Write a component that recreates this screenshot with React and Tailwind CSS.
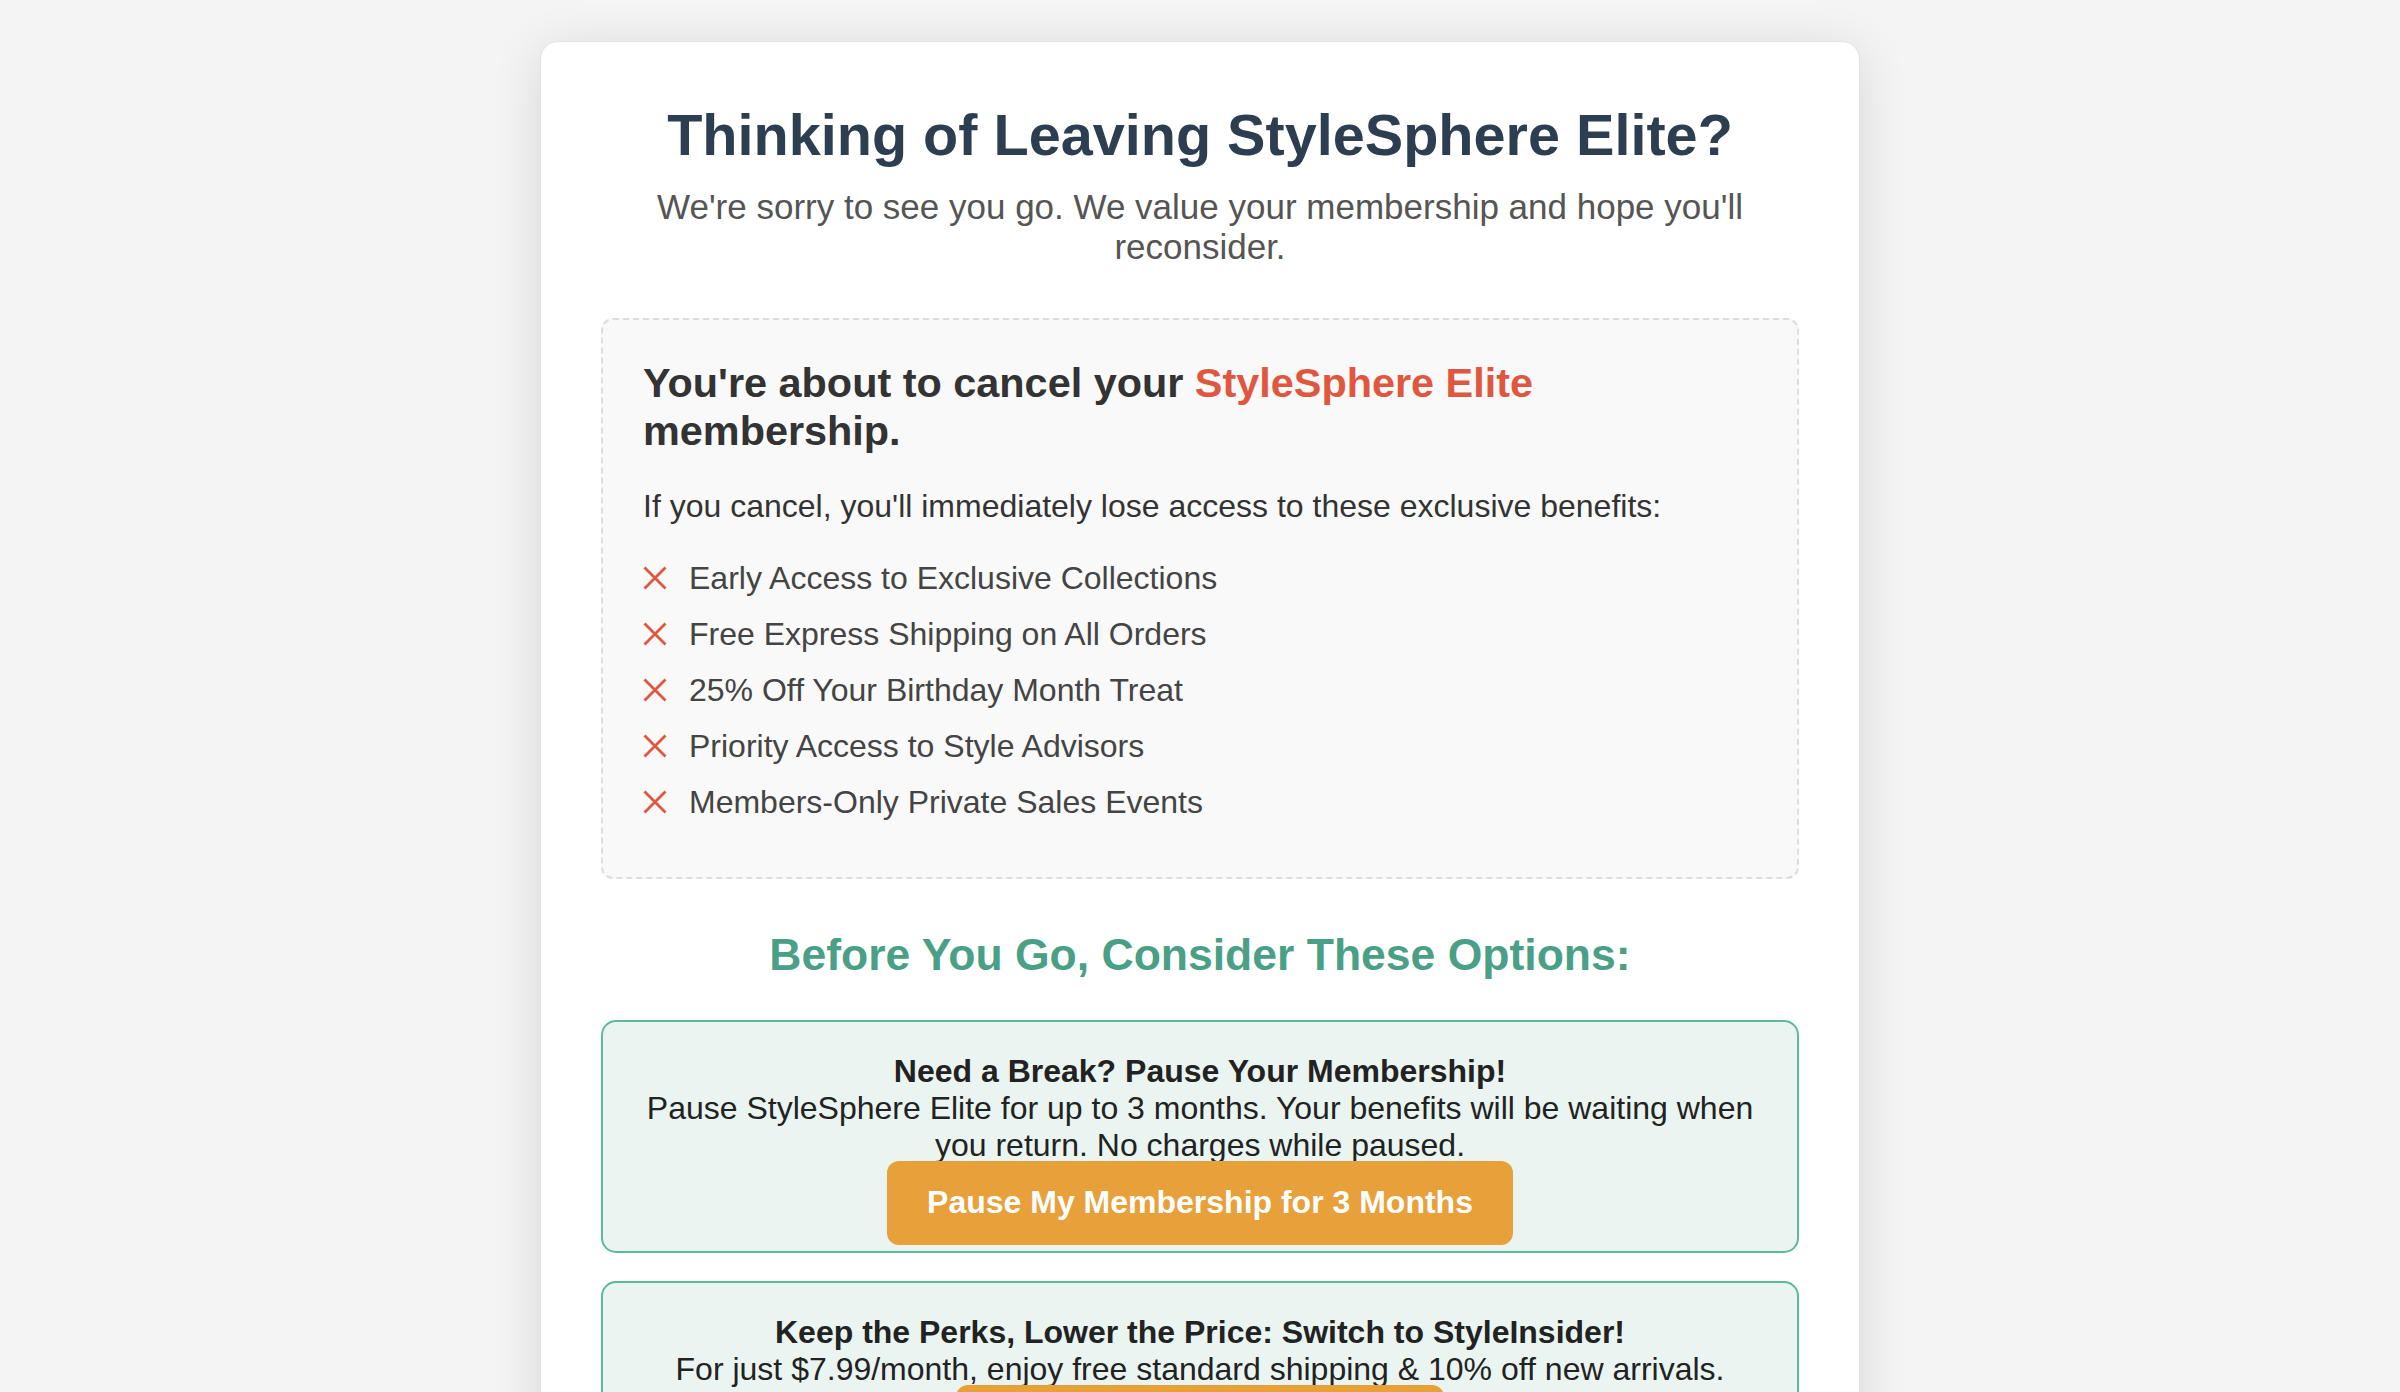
import React from "react";

const lostBenefits = [
  "Early Access to Exclusive Collections",
  "Free Express Shipping on All Orders",
  "25% Off Your Birthday Month Treat",
  "Priority Access to Style Advisors",
  "Members-Only Private Sales Events",
];

const retentionOffers = [
  {
    title: "Need a Break? Pause Your Membership!",
    text: "Pause StyleSphere Elite for up to 3 months. Your benefits will be waiting when you return. No charges while paused.",
    action: "Pause My Membership for 3 Months",
  },
  {
    title: "Keep the Perks, Lower the Price: Switch to StyleInsider!",
    text: "For just $7.99/month, enjoy free standard shipping & 10% off new arrivals.",
    action: "Switch to StyleInsider Now",
  },
];

function CrossIcon() {
  return (
    <svg width="24" height="24" viewBox="0 0 24 24" className="shrink-0 text-[#e0573f]">
      <path d="M1.5 1.5L22.5 22.5M22.5 1.5L1.5 22.5" stroke="currentColor" strokeWidth="2.8" fill="none" />
    </svg>
  );
}

function OfferCard({ title, text, action }) {
  return (
    <div className="flex flex-col items-center rounded-[15px] border-2 border-[#5cba9b] bg-[#eaf5f1] px-[30px] pt-[31px] pb-[6px] text-center text-[#222]">
      <h3 className="text-[32px] font-bold leading-[normal]">{title}</h3>
      <p className="text-[32px] leading-[normal]">{text}</p>
      <button className="-mt-[3px] rounded-[12px] bg-[#e8a03b] px-[40px] py-[23.5px] text-[32px] font-bold leading-[normal] text-white">
        {action}
      </button>
    </div>
  );
}

export default function App() {
  return (
    <div className="min-h-screen bg-[#f4f4f4] pt-[41px] pb-[60px] font-['Liberation_Sans',Arial,sans-serif]">
      <div className="mx-auto w-[1320px] rounded-[18px] border border-[#e3e3e3] bg-white px-[60px] pt-[60px] pb-[60px] shadow-[0_8px_50px_rgba(0,0,0,0.12)]">
        {/* Header */}
        <h1 className="text-center text-[57.6px] font-bold leading-[normal] text-[#2c3e50]">
          Thinking of Leaving StyleSphere Elite?
        </h1>
        <p className="mt-[19px] text-center text-[35px] leading-[normal] text-[#555]">
          We're sorry to see you go. We value your membership and hope you'll reconsider.
        </p>

        {/* What they lose */}
        <div className="mt-[51px] rounded-[12px] border-2 border-dashed border-[#dddddd] bg-[#f9f9f9] px-[40px] pt-[38.5px] pb-[56px]">
          <h2 className="text-[41.4px] font-bold leading-[48.5px] text-[#333]">
            You're about to cancel your <span className="text-[#e0573f]">StyleSphere Elite</span> membership.
          </h2>
          <p className="mt-[32px] text-[32px] leading-[normal] text-[#333]">
            If you cancel, you'll immediately lose access to these exclusive benefits:
          </p>
          <ul className="mt-[35px] flex flex-col gap-[19px]">
            {lostBenefits.map((item) => (
              <li key={item} className="flex items-center gap-[22px] text-[32px] leading-[normal] text-[#444]">
                <CrossIcon />
                <span>{item}</span>
              </li>
            ))}
          </ul>
        </div>

        {/* Offers */}
        <h2 className="mt-[51px] text-center text-[44.5px] font-bold leading-[normal] text-[#4aa086]">
          Before You Go, Consider These Options:
        </h2>
        <div className="mt-[40px] flex flex-col gap-[28.5px]">
          {retentionOffers.map((offer) => (
            <OfferCard key={offer.title} {...offer} />
          ))}
        </div>
      </div>
    </div>
  );
}
